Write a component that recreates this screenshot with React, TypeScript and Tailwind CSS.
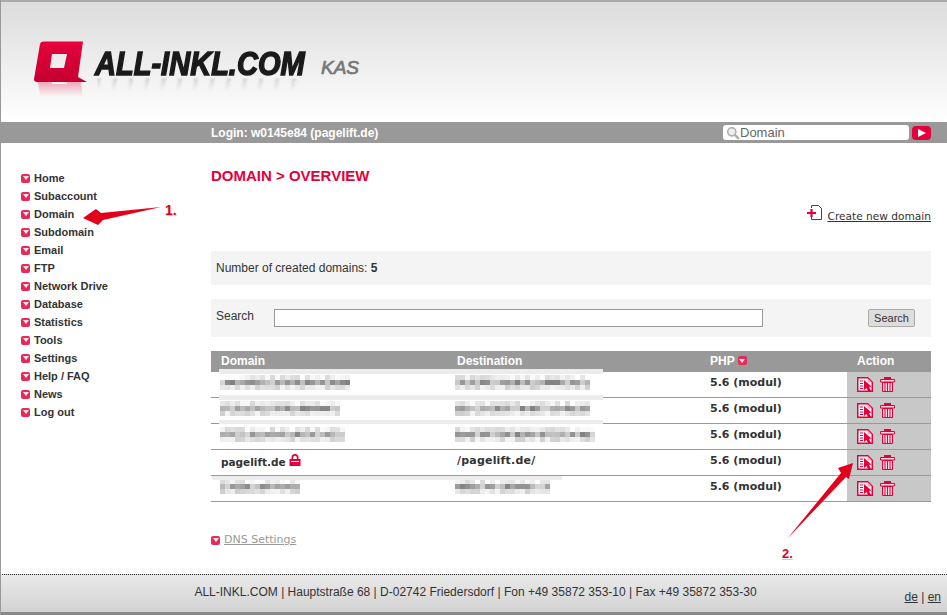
import React from "react";

const navItems = [
  "Home",
  "Subaccount",
  "Domain",
  "Subdomain",
  "Email",
  "FTP",
  "Network Drive",
  "Database",
  "Statistics",
  "Tools",
  "Settings",
  "Help / FAQ",
  "News",
  "Log out",
];

const rows = [
  { domainW: 130, destW: 135, seed: 3, strip: "top-[-3px] left-[8px] w-[384px] h-[5px]" },
  { domainW: 120, destW: 135, seed: 11, strip: "top-[-3px] left-[8px] w-[384px] h-[5px]" },
  { domainW: 125, destW: 140, seed: 23, strip: "top-[-4px] left-[8px] w-[384px] h-[4px]" },
  { domain: "pagelift.de", dest: "/pagelift.de/", domainW: 0, destW: 0, seed: 0, strip: "" },
  { domainW: 80, destW: 95, seed: 37, strip: "top-[0px] left-[1px] w-[350px] h-[4px]" },
];

function Bullet({ className = "" }: { className?: string }) {
  return (
    <span className={"inline-flex w-[9px] h-[9px] rounded-[2px] bg-[#e62a5a] items-center justify-center shrink-0 " + className}>
      <span className="w-0 h-0 border-l-[3px] border-r-[3px] border-t-[4px] border-l-transparent border-r-transparent border-t-[#ffe6ec]" />
    </span>
  );
}

// pixelated smudge standing in for the censored domain names
function Blurred({ width, seed }: { width: number; seed: number }) {
  const cols = Math.round(width / 5);
  const cells = [];
  for (let r = 0; r < 3; r++) {
    for (let c = 0; c < cols; c++) {
      const n = Math.abs(Math.sin((c + 1) * 12.9898 + (r + 1) * 78.233 + seed) * 43758.5453) % 1;
      const base = r === 1 ? 130 : r === 0 ? 215 : 205;
      const spread = r === 1 ? 85 : 40;
      const v = Math.round(base + n * spread);
      cells.push(<div key={r + "-" + c} className="w-[5px] h-[5px]" style={{ backgroundColor: `rgb(${v},${v},${v})` }} />);
    }
  }
  return (
    <div className="grid" style={{ gridTemplateColumns: `repeat(${cols}, 5px)` }}>
      {cells}
    </div>
  );
}

function EditIcon() {
  return (
    <svg width="16" height="15" viewBox="0 0 16 15">
      <path d="M.75.75h10l4.500 4.500v9h-14.500z" fill="#fff" stroke="#e4003a" strokeWidth="1.500" />
      <path d="M10.500 1v4.500h4.500z" fill="#f7a8bd" />
      <path d="M3 4h3M3 6.500h3M3 9h3M3 11.500h3" stroke="#e4003a" strokeWidth="1.200" />
      <path d="M7 3l7.500 6.500-2.500.5 2 4h-3l-1.500-3-2.500 2z" fill="#e4003a" />
    </svg>
  );
}

function TrashIcon() {
  return (
    <svg width="15" height="15" viewBox="0 0 15 15">
      <path d="M4 0h7v2H4z" fill="#e4003a" />
      <path d="M.5 2.500h14v2.500H.5z" fill="#fbd5df" stroke="#e4003a" />
      <path d="M2.500 5.500h10v9h-10z" fill="#fbd5df" stroke="#e4003a" />
      <path d="M5 6v8M7.500 6v8M10 6v8" stroke="#e4003a" />
    </svg>
  );
}

function LockIcon() {
  return (
    <svg width="12" height="13" viewBox="0 0 12 13" className="ml-[3px] mb-[4px]">
      <path d="M2.500 6V4.500a3.500 3.500 0 017 0V6H7.800V4.500a1.800 1.800 0 00-3.600 0V6z" fill="#e4003a" />
      <path d="M.5 6h11v7H.5z" fill="#e4003a" />
      <path d="M2 8.500h8" stroke="#fff" />
    </svg>
  );
}

function LogoMark() {
  return (
    <svg width="53" height="41" viewBox="0 0 53 41" className="shrink-0">
      <defs>
        <linearGradient id="logoRed" x1="0" y1="0" x2="0" y2="1">
          <stop offset="0" stopColor="#e6003c" />
          <stop offset="1" stopColor="#c40030" />
        </linearGradient>
      </defs>
      <path
        fillRule="evenodd"
        fill="url(#logoRed)"
        d="M9 0.500Q6.500 0.500 6 3L0 38Q0 41 3 41H53L44 36L49 0.500ZM18 13H33L30 27H16Z"
      />
    </svg>
  );
}

function Annotations() {
  return (
    <svg width="947" height="615" viewBox="0 0 947 615" className="absolute inset-0 pointer-events-none">
      <path d="M160 207L100 213L95 209L82 218L97 225L102 220Z" fill="#e2001a" />
      <path d="M786 539L840 473L837 468L852 463L848 479L845 477Z" fill="#e2001a" />
    </svg>
  );
}

export default function App() {
  return (
    <div className="relative w-[947px] h-[615px] overflow-hidden bg-white flex flex-col border-l border-l-[#999] font-['Liberation_Sans',sans-serif] text-[#333]">
      {/* top logo area */}
      <div className="h-[122px] shrink-0 border-t-2 border-t-[#aaa] bg-gradient-to-b from-[#dcdcdc] to-white flex items-start pl-[33px] pt-[39px]">
        <div className="relative">
          <LogoMark />
          <div className="absolute left-0 top-[41px] -scale-y-100 opacity-30 h-[15px] overflow-hidden [mask-image:linear-gradient(to_top,black,transparent)]">
            <LogoMark />
          </div>
        </div>
        <div className="relative ml-[8px] mt-[5px] w-[212px] h-[36px]">
          <div className="origin-left scale-x-[0.88] whitespace-nowrap text-[33px] leading-[36px] font-bold italic text-[#1a1a1a] [-webkit-text-stroke:1.5px_#1a1a1a]">
            ALL-INKL.COM
          </div>
          {/* faint streaks of the logo's reflection */}
          <div className="absolute left-[2px] top-[32px] w-[208px] h-[13px] opacity-20 bg-[repeating-linear-gradient(100deg,#555_0px,#555_4px,transparent_4px,transparent_16px)] [mask-image:linear-gradient(to_bottom,black,transparent)] blur-[1px]" />
        </div>
        <div className="ml-[14px] mt-[16px] text-[19px] leading-[22px] italic text-[#777] [-webkit-text-stroke:0.7px_#777]">KAS</div>
      </div>

      {/* login bar */}
      <div className="h-[21px] shrink-0 bg-[#999] flex items-center pl-[210px] pr-[16px]">
        <span className="text-[12px] font-bold text-white">Login: w0145e84 (pagelift.de)</span>
        <div className="ml-auto flex items-center gap-[3px]">
          <div className="w-[186px] h-[15px] bg-white rounded-[3px] flex items-center pl-[3px] text-[13px] text-[#666]">
            <svg width="14" height="14" viewBox="0 0 12 12">
              <circle cx="5" cy="5" r="3.500" fill="#eee" stroke="#aaa" strokeWidth="1.300" />
              <path d="M7.500 7.500L11 11" stroke="#aaa" strokeWidth="2" />
            </svg>
            Domain
          </div>
          <div className="w-[19px] h-[14px] bg-[#e4003a] rounded-[4px] flex items-center justify-center">
            <span className="w-0 h-0 border-t-[4px] border-b-[4px] border-l-[8px] border-t-transparent border-b-transparent border-l-white" />
          </div>
        </div>
      </div>

      {/* body */}
      <div className="flex-1 flex min-h-0">
        <nav className="w-[210px] shrink-0 pl-[20px] pt-[26px] flex flex-col">
          {navItems.map((item) => (
            <a key={item} className="h-[18px] flex items-center gap-[4px] text-[11px] font-bold text-[#333]">
              <Bullet />
              {item}
            </a>
          ))}
        </nav>

        <main className="w-[720px] shrink-0 flex flex-col">
          <h1 className="mt-[24px] text-[15px] leading-[18px] font-bold text-[#e4003a]">DOMAIN &gt; OVERVIEW</h1>

          <div className="mt-[20px] h-[18px] flex items-end justify-end gap-[4px]">
            <svg width="16" height="17" viewBox="0 0 16 17" className="mb-[2px]">
              <path d="M4.500 4V1.500h7l3 3v11h-10V13" fill="#fff" stroke="#444" />
              <path d="M0 9h9M4.500 5v8" stroke="#e4003a" strokeWidth="2.200" />
            </svg>
            <a className="font-['DejaVu_Sans',sans-serif] text-[10.6px] leading-[14px] text-[#333] underline">Create new domain</a>
          </div>

          <div className="mt-[28px] h-[34px] bg-[#f4f4f4] flex items-center pl-[5px] text-[12px]">
            <span>Number of created domains: <b>5</b></span>
          </div>

          <div className="mt-[14px] h-[38px] bg-[#f4f4f4] flex items-center pl-[5px] pr-[16px] text-[12px]">
            <span className="w-[58px] mb-[4px]">Search</span>
            <div className="w-[489px] h-[18px] bg-white border border-[#999]" />
            <button className="ml-auto w-[47px] h-[18px] bg-[#ddd] border border-[#aaa] rounded-[2px] text-[11px] text-[#333]">Search</button>
          </div>

          {/* table */}
          <div className="mt-[14px] font-['DejaVu_Sans',sans-serif]">
            <div className="h-[21px] pb-[2px] bg-[#999] grid grid-cols-[236px_253px_147px_84px] items-center font-['Liberation_Sans',sans-serif] text-[12px] font-bold text-white">
              <span className="pl-[10px]">Domain</span>
              <span className="pl-[10px]">Destination</span>
              <span className="pl-[10px] flex items-center gap-[3px]">
                PHP <Bullet />
              </span>
              <span className="pl-[10px]">Action</span>
            </div>
            {rows.map((row, i) => (
              <div key={i} className="relative h-[26px] border-b border-b-[#999] grid grid-cols-[236px_253px_147px_84px] text-[11px] font-bold text-[#333]">
                <div className="pl-[9px] pt-[3px] flex items-start">
                  {row.domain ? (
                    <span className="flex items-center pl-px leading-[14px] text-[10.5px]">
                      {row.domain}
                      <LockIcon />
                    </span>
                  ) : (
                    <Blurred width={row.domainW} seed={row.seed} />
                  )}
                </div>
                <div className="pl-[8px] pt-[3px] flex items-start">
                  {row.dest ? <span className="pl-[2px] pt-[1px] leading-[14px] tracking-[0.2px]">{row.dest}</span> : <Blurred width={row.destW} seed={row.seed + 5} />}
                </div>
                <div className="pl-[10px] pt-[4px] leading-[14px]">5.6 (modul)</div>
                <div className="bg-[#c8c8c8] pl-[10px] pt-[5px] flex items-start gap-[7px]">
                  <EditIcon />
                  <TrashIcon />
                </div>
                {row.strip && <div className={"absolute bg-[#ececec] " + row.strip} />}
              </div>
            ))}
          </div>

          <div className="mt-[30px] flex items-center gap-[4px] font-['DejaVu_Sans',sans-serif] text-[11px] text-[#999]">
            <Bullet />
            <a className="underline">DNS Settings</a>
          </div>
        </main>
      </div>

      {/* footer */}
      <div className="shrink-0 -ml-px border-b-[3px] border-b-[#888]">
        <div className="h-[38px] border-t border-dotted border-t-[#333] bg-gradient-to-b from-[#eaeaea] to-[#d2d2d2] relative flex items-center justify-center text-[12px] text-[#333] pb-[4px] pl-[4px]">
          ALL-INKL.COM | Hauptstraße 68 | D-02742 Friedersdorf | Fon +49 35872 353-10 | Fax +49 35872 353-30
          <span className="absolute right-[6px] top-[13px]">
            <a className="underline">de</a> | <a className="underline">en</a>
          </span>
        </div>
      </div>

      <Annotations />
      <span className="absolute left-[164px] top-[200px] text-[14px] font-bold text-[#e2001a] [text-shadow:1px_1px_1px_#ccc]">1.</span>
      <span className="absolute left-[781px] top-[544px] text-[13px] font-bold text-[#e2001a] underline decoration-[#ccc]">2.</span>
    </div>
  );
}
